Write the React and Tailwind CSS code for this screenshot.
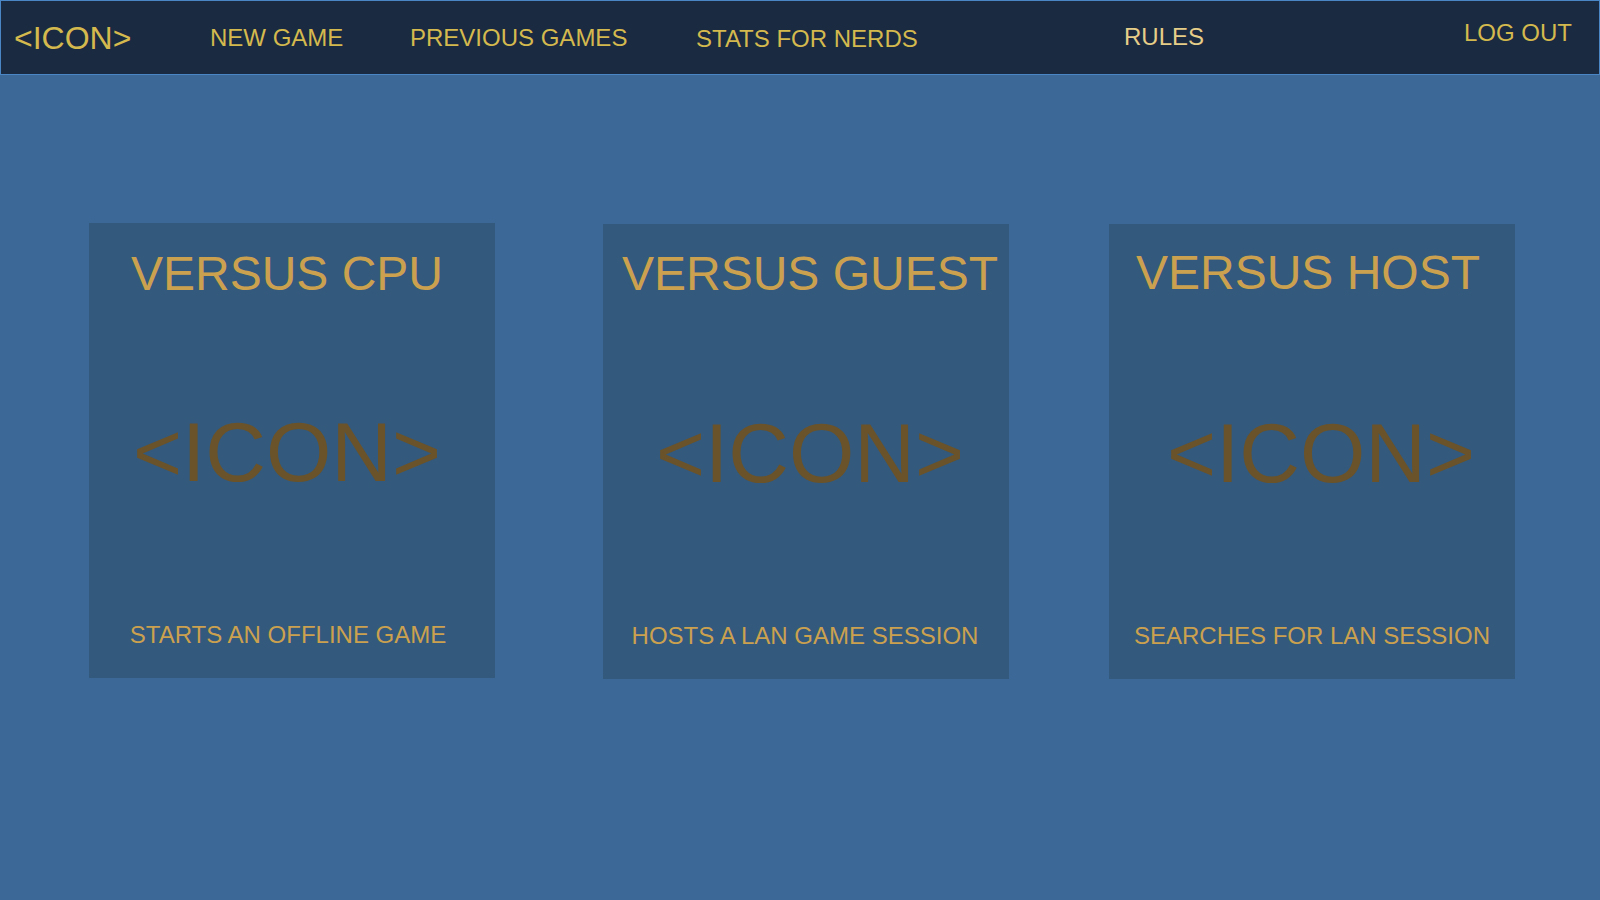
const navItems = [
  { label: "<ICON>", box: "w-[196px] mt-[21px] text-[32px]", color: "text-[#d4b94e]" },
  { label: "NEW GAME", box: "w-[200px] mt-[25px] text-[24px]", color: "text-[#d4b94e]" },
  { label: "PREVIOUS GAMES", box: "w-[286px] mt-[25px] text-[24px]", color: "text-[#d4b94e]" },
  { label: "STATS FOR NERDS", box: "w-[428px] mt-[26px] text-[24px]", color: "text-[#d4b94e]" },
  { label: "RULES", box: "w-[340px] mt-[24px] text-[24px]", color: "text-[#e6cd88]" },
  { label: "LOG OUT", box: "mt-[20px] text-[24px]", color: "text-[#d4b94e]" },
];

const modes = [
  {
    title: "VERSUS CPU",
    note: "STARTS AN OFFLINE GAME",
    card: "mt-0 pt-[27px]",
    titleShift: "pr-[10px]",
    iconShift: "mt-[112px] pr-[10px]",
    noteShift: "mt-[129px] pr-[8px]",
  },
  {
    title: "VERSUS GUEST",
    note: "HOSTS A LAN GAME SESSION",
    card: "mt-[1px] ml-[108px] pt-[26px]",
    titleShift: "pl-[8px]",
    iconShift: "mt-[113px] pl-[8px]",
    noteShift: "mt-[129px] pr-[2px]",
  },
  {
    title: "VERSUS HOST",
    note: "SEARCHES FOR LAN SESSION",
    card: "mt-[1px] ml-[100px] pt-[25px]",
    titleShift: "pr-[8px]",
    iconShift: "mt-[114px] pl-[18px]",
    noteShift: "mt-[129px]",
  },
];

function App() {
  return (
    <div className="min-h-[900px] w-full bg-[#3b6896] font-['Liberation_Sans',Arial,sans-serif]">
      <nav className="flex h-[75px] items-start border border-[#4a86c6] bg-[#1a2a41] pl-[13px]">
        {navItems.map((item) => (
          <a key={item.label} href="#" className={`block shrink-0 leading-none ${item.box} ${item.color}`}>
            {item.label}
          </a>
        ))}
      </nav>

      <main className="flex items-start pl-[89px] pt-[148px]">
        {modes.map((mode) => (
          <section
            key={mode.title}
            className={`flex h-[455px] w-[406px] shrink-0 flex-col items-center bg-[#33597d] ${mode.card}`}
          >
            <h2 className={`whitespace-nowrap text-[48px] leading-none text-[#cba14f] ${mode.titleShift}`}>
              {mode.title}
            </h2>
            <div className={`whitespace-nowrap text-[84px] leading-none text-[#6a532a] ${mode.iconShift}`}>
              &lt;ICON&gt;
            </div>
            <p className={`whitespace-nowrap text-[24px] leading-none text-[#cba14f] ${mode.noteShift}`}>
              {mode.note}
            </p>
          </section>
        ))}
      </main>
    </div>
  );
}

export default App;
